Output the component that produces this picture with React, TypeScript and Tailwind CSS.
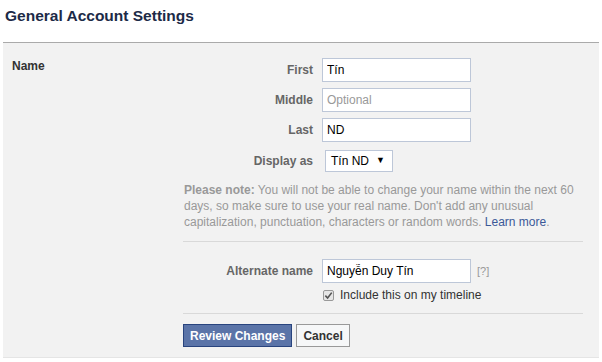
import React from 'react';

const font = { fontFamily: '"Liberation Sans", Arial, sans-serif' };

function Field({ label, value, placeholder }: { label: string; value?: string; placeholder?: string }) {
  return (
    <div className="flex items-center">
      <label className="w-[139px] pr-[9px] text-right text-[12px] font-bold text-[#666]">{label}</label>
      <input
        readOnly
        value={value ?? ''}
        placeholder={placeholder}
        className="h-[24px] w-[149px] border border-[#bdc7d8] bg-white px-[4px] text-[12px] text-[#000] outline-none placeholder:text-[#999]"
        style={font}
      />
    </div>
  );
}

export default function App() {
  return (
    <div className="h-[362px] w-[602px] bg-white text-[12px] text-[#333]" style={font}>
      <h2 className="h-[42px] pl-[5px] pt-[4px] text-[15.5px] font-bold text-[#1c2a47]">General Account Settings</h2>

      <div className="mx-[3px] flex border-t border-b border-t-[#aaa] border-b-[#e5e5e5] bg-[#f2f2f2] pb-[10px] pt-[15px]">
        <div className="w-[180px] pl-[9px] text-[12px] font-bold leading-[16px] text-[#333]">Name</div>

        <div className="w-[400px]">
          <div className="flex flex-col gap-[6px]">
            <Field label="First" value="Tín" />
            <Field label="Middle" placeholder="Optional" />
            <Field label="Last" value="ND" />
          </div>

          <div className="mt-[8px] flex items-center">
            <label className="w-[139px] pr-[9px] text-right text-[12px] font-bold text-[#666]">Display as</label>
            <div className="ml-[3px] flex h-[22px] w-[68px] items-center justify-between border border-[#bdc7d8] bg-white pl-[5px] pr-[7px] text-[12px] text-[#000]">
              <span>Tín ND</span>
              <span className="text-[9px]">▼</span>
            </div>
          </div>

          <p className="mt-[10px] pl-[1px] text-[12px] leading-[16px] text-[#999]">
            <span className="font-bold">Please note:</span> You will not be able to change your name within the next 60
            days, so make sure to use your real name. Don't add any unusual capitalization, punctuation, characters or
            random words. <span className="text-[#3b5998]">Learn more</span>.
          </p>

          <div className="mt-[11px] border-t border-[#d9d9d9]" />

          <div className="mt-[17px] flex items-center">
            <Field label="Alternate name" value="Nguyễn Duy Tín" />
            <span className="ml-[6px] text-[11px] text-[#999]">[?]</span>
          </div>

          <div className="mt-[3px] flex items-center pl-[140px]">
            <span className="flex h-[11px] w-[11px] items-center justify-center rounded-[2px] border border-[#999] bg-[#e6e6e6]">
              <svg viewBox="0 0 10 10" className="h-[9px] w-[9px]">
                <path d="M1.5 5.2 L4 7.8 L8.6 1.8" fill="none" stroke="#555" strokeWidth="1.8" />
              </svg>
            </span>
            <span className="ml-[6px] text-[12px] text-[#333]">Include this on my timeline</span>
          </div>

          <div className="mt-[9px] border-t border-[#d9d9d9]" />

          <div className="mt-[10px] flex gap-[4px]">
            <button className="h-[23px] border border-[#29447e] bg-[#5b74a8] px-[6px] text-[12px] font-bold text-white">
              Review Changes
            </button>
            <button className="h-[23px] border border-[#999] bg-[#f6f7f8] px-[6px] text-[12px] font-bold text-[#333]">
              Cancel
            </button>
          </div>
        </div>
      </div>
    </div>
  );
}
